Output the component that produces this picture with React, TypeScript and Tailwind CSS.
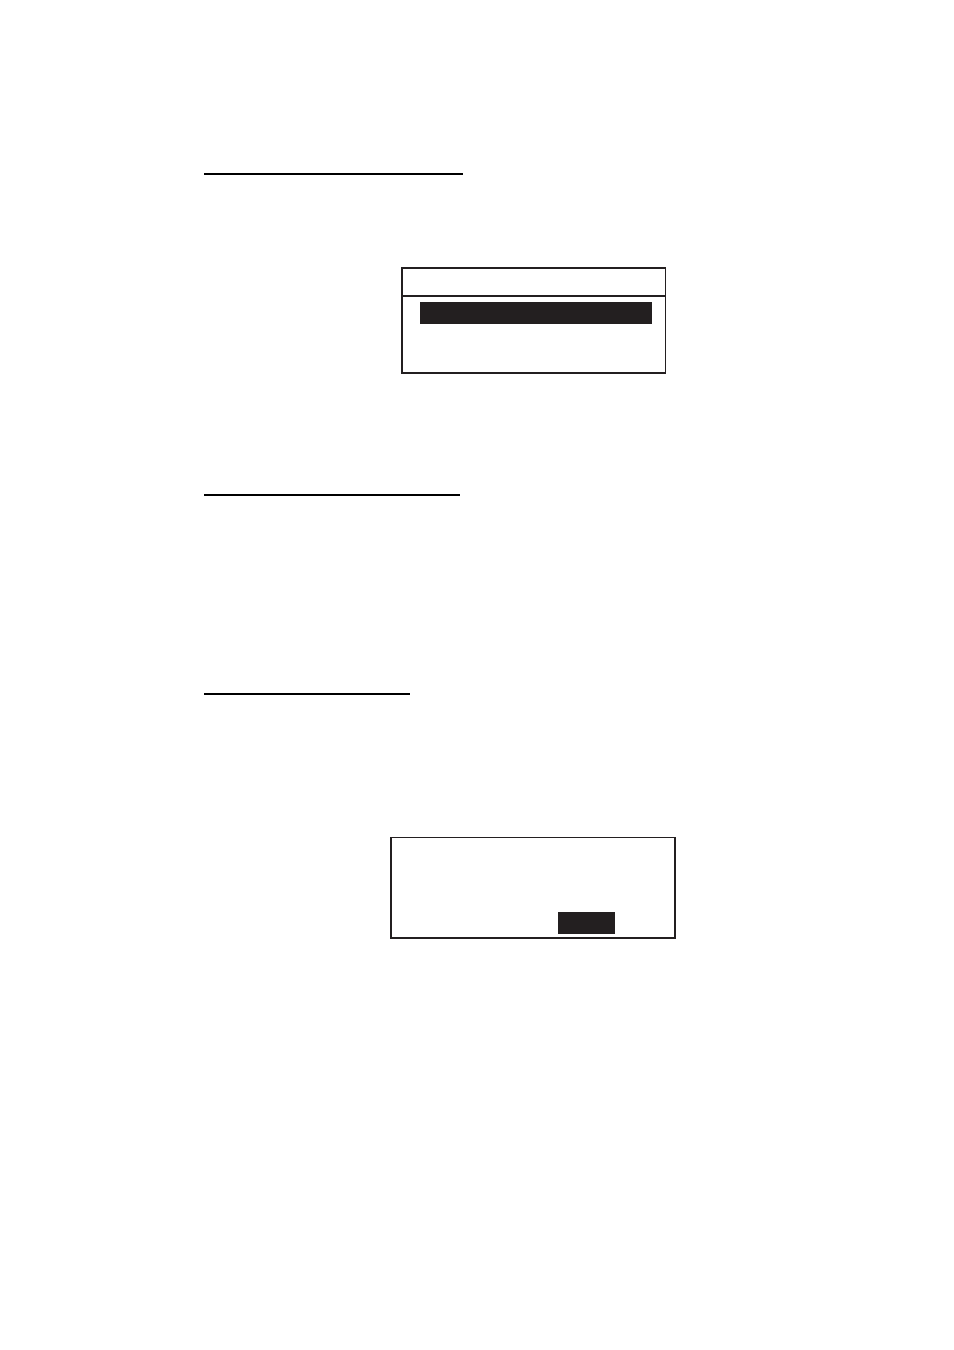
import React from 'react';

// Rule under a section heading
function SectionRule({ className }: { className: string }) {
  return <hr className={`h-0.5 border-0 bg-black ${className}`} />;
}

// LCD menu: title row, then the list with its selected row
function MenuScreen() {
  return (
    <div className="w-[265px] mx-auto border-2 border-r border-[#231f20]">
      <div className="h-7 border-b-2 border-[#231f20]" />
      <div className="pt-[5px] pb-12 pl-[17px] pr-[13px]">
        <div className="h-[22px] bg-[#231f20]" />
      </div>
    </div>
  );
}

// LCD prompt: message area with the selected option at the bottom
function PromptScreen() {
  return (
    <div className="w-[286px] mx-auto flex justify-end border-2 border-t border-[#231f20] pt-[74px] pb-[3px] pr-[59px]">
      <div className="w-[57px] h-[22px] bg-[#231f20]" />
    </div>
  );
}

export default function App() {
  return (
    <main className="min-h-screen bg-white pt-[173px] pl-[204px] pr-[92px]">
      {/* 1. Menu section */}
      <section>
        <SectionRule className="w-[259px]" />
        <div className="mt-[92px]">
          <MenuScreen />
        </div>
      </section>

      {/* 2. Text section */}
      <section className="mt-[120px]">
        <SectionRule className="w-64" />
      </section>

      {/* 3. Prompt section */}
      <section className="mt-[197px]">
        <SectionRule className="w-[206px]" />
        <div className="mt-[142px]">
          <PromptScreen />
        </div>
      </section>
    </main>
  );
}
